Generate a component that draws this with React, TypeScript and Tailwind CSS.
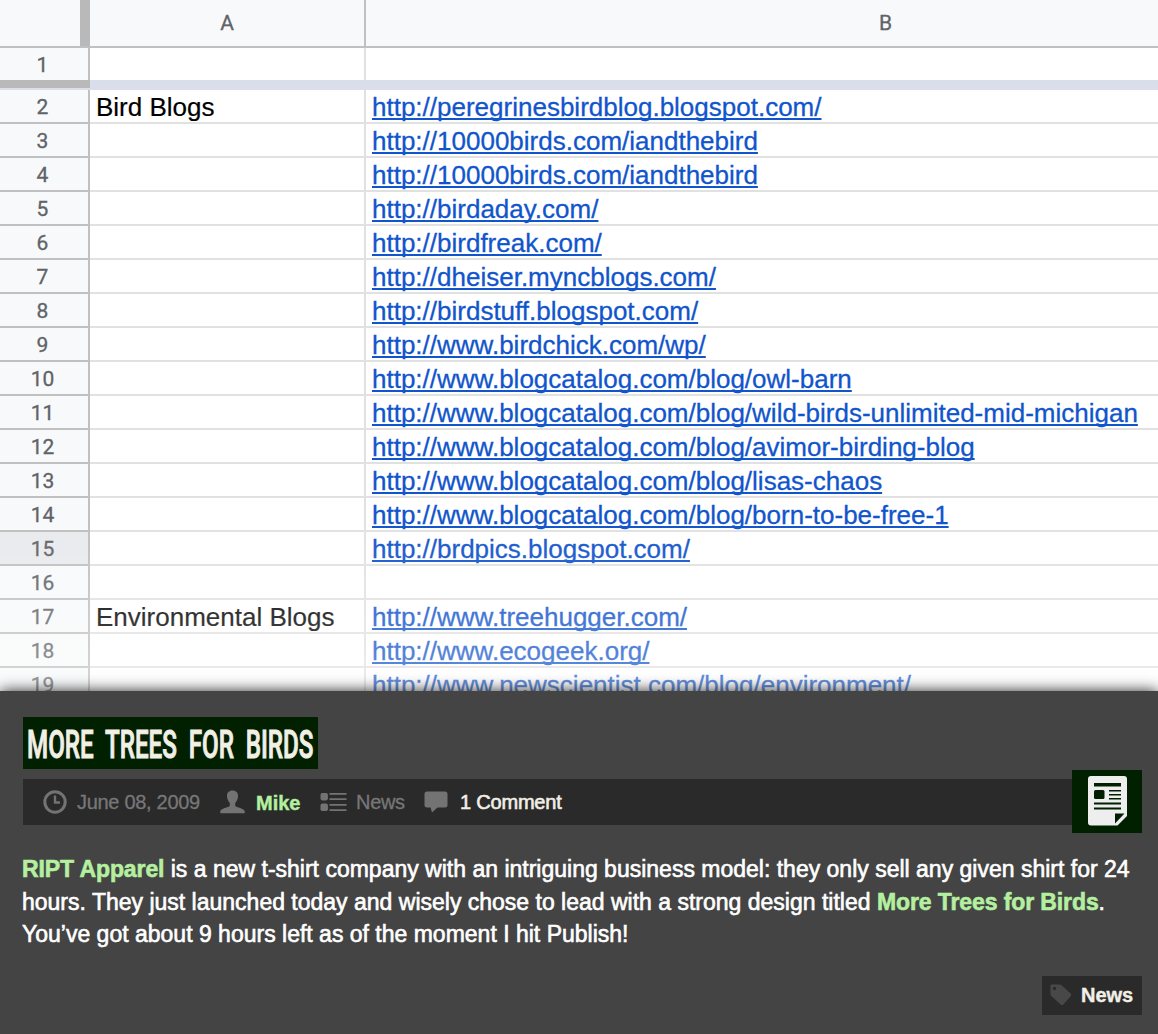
import React from 'react';

interface Row {
  num: number;
  label?: string;
  url?: string;
}

const rows: Row[] = [
  { num: 2, label: 'Bird Blogs', url: 'http://peregrinesbirdblog.blogspot.com/' },
  { num: 3, url: 'http://10000birds.com/iandthebird' },
  { num: 4, url: 'http://10000birds.com/iandthebird' },
  { num: 5, url: 'http://birdaday.com/' },
  { num: 6, url: 'http://birdfreak.com/' },
  { num: 7, url: 'http://dheiser.myncblogs.com/' },
  { num: 8, url: 'http://birdstuff.blogspot.com/' },
  { num: 9, url: 'http://www.birdchick.com/wp/' },
  { num: 10, url: 'http://www.blogcatalog.com/blog/owl-barn' },
  { num: 11, url: 'http://www.blogcatalog.com/blog/wild-birds-unlimited-mid-michigan' },
  { num: 12, url: 'http://www.blogcatalog.com/blog/avimor-birding-blog' },
  { num: 13, url: 'http://www.blogcatalog.com/blog/lisas-chaos' },
  { num: 14, url: 'http://www.blogcatalog.com/blog/born-to-be-free-1' },
  { num: 15, url: 'http://brdpics.blogspot.com/' },
  { num: 16 },
  { num: 17, label: 'Environmental Blogs', url: 'http://www.treehugger.com/' },
  { num: 18, url: 'http://www.ecogeek.org/' },
  { num: 19, url: 'http://www.newscientist.com/blog/environment/' },
];

const SheetRow: React.FC<{ row: Row }> = ({ row }) => (
  <div className="flex h-[34px] shrink-0">
    <div
      className={`w-[90px] border-r-2 border-b-2 border-[#c0c0c0] pr-[3px] text-center font-[Roboto,sans-serif] text-[21px] leading-[35px] text-[#5f6368] [-webkit-text-stroke:0.3px] ${
        row.num === 15 ? 'bg-[#e8eaed]' : 'bg-[#f8f9fa]'
      }`}
    >
      {row.num}
    </div>
    <div className="w-[276px] border-r-2 border-b-2 border-[#e1e1e1] pl-[6px] text-[26px] leading-[35px] whitespace-nowrap [-webkit-text-stroke:0.2px]">
      {row.label}
    </div>
    <div className="flex-1 border-b-2 border-[#e1e1e1] pl-[6px] text-[26px] leading-[35px] whitespace-nowrap [-webkit-text-stroke:0.3px]">
      {row.url && (
        <a className="text-[#1155cc] underline decoration-2 underline-offset-2 [text-decoration-skip-ink:none]">{row.url}</a>
      )}
    </div>
  </div>
);

const Spreadsheet: React.FC = () => (
  <div className="relative flex h-[691px] flex-col overflow-hidden bg-white font-['Liberation_Sans',Arial,sans-serif] text-black">
    {/* Column headers */}
    <div className="flex h-[48px] shrink-0 border-b-2 border-[#c0c0c0] bg-[#f8f9fa] text-center font-[Roboto,sans-serif] text-[21px] leading-[46px] text-[#5f6368] [-webkit-text-stroke:0.3px]">
      <div className="w-[90px] shrink-0 border-r-[10px] border-[#b9b9b9]" />
      <div className="w-[276px] shrink-0 border-r-2 border-[#c0c0c0]">A</div>
      <div className="w-[1039px] shrink-0">B</div>
    </div>
    {/* Frozen row and its drag handle */}
    <div className="flex h-[32px] shrink-0">
      <div className="w-[90px] border-r-2 border-[#c0c0c0] bg-[#f8f9fa] pr-[3px] text-center font-[Roboto,sans-serif] text-[21px] leading-[35px] text-[#5f6368] [-webkit-text-stroke:0.3px]">
        1
      </div>
      <div className="w-[276px] border-r-2 border-[#e1e1e1]" />
    </div>
    <div className="flex h-[10px] shrink-0 bg-[#d9deea]">
      <div className="h-[8px] w-[90px] bg-[#b9b9b9]" />
    </div>
    {rows.map((row) => (
      <SheetRow key={row.num} row={row} />
    ))}
    {/* Fade into the post below */}
    <div className="absolute inset-x-0 bottom-0 h-[171px] bg-gradient-to-b from-white/0 to-white/35" />
  </div>
);

const ClockIcon = () => (
  <svg className="h-[24px] w-[24px] shrink-0" viewBox="0 0 24 24" fill="none" stroke="#737373" strokeWidth="3">
    <circle cx="12" cy="12" r="10.2" />
    <path d="M12 5.5V12.5H17" strokeWidth="2.4" />
  </svg>
);

const UserIcon = () => (
  <svg className="h-[24px] w-[25px] shrink-0" viewBox="0 0 25 24" fill="#737373">
    <path d="M12.5.5c3.600 0 5.800 2.300 5.500 5.700-.2 3.300-1.500 5.400-2.800 6.800v3c1.200 1.400 9.300 2.200 9.500 5.400v1.800H.3v-1.800c.2-3.200 8.300-4 9.500-5.400v-3C8.500 11.600 7.200 9.500 7 6.200 6.700 2.800 8.900.5 12.500.5z" />
  </svg>
);

const ListIcon = () => (
  <svg className="h-[20px] w-[28px] shrink-0" viewBox="0 0 28 20" fill="#737373">
    <rect x="0.5" y="1" width="7.4" height="7.4" rx="1.8" />
    <rect x="0.5" y="11.600" width="7.4" height="7.4" rx="1.8" />
    <path d="M9.500 1h17v1.800h-17zM9.500 6.300h17v1.800h-17zM9.500 12h17v1.800h-17zM9.500 17.200h17V19h-17z" />
  </svg>
);

const CommentIcon = () => (
  <svg className="h-[22px] w-[24px] shrink-0" viewBox="0 0 24 22" fill="#737373">
    <path d="M3 .5h18A2.500 2.500 0 0 1 23.500 3v11a2.500 2.500 0 0 1-2.500 2.500h-7.500L8 21.500l-1.500-5H3A2.500 2.500 0 0 1 .5 14V3A2.500 2.500 0 0 1 3 .5z" />
  </svg>
);

const PostIcon = () => (
  <svg className="h-[50px] w-[39px] shrink-0" viewBox="0 0 39 50">
    <path d="M3 0h33a3 3 0 0 1 3 3v37l-9.500 9.500H3a3 3 0 0 1-3-3V3a3 3 0 0 1 3-3z" fill="#eee" />
    <path d="M6 7h27v3.500H6zM6 26.500h27v2H6zM6 31.500h27v2H6zM21 14h12v1.600H21zM21 18h12v1.600H21zM21 22h12v1.600H21z" fill="#002000" />
    <rect x="6" y="14" width="10.5" height="9" rx="1.5" fill="#002000" />
    <path d="M27 37.500h9.500L27 47.500z" fill="#002000" />
  </svg>
);

const TagIcon = () => (
  <svg className="h-[22px] w-[22px] shrink-0" viewBox="0 0 22 22" fill="#484848">
    <path
      fillRule="evenodd"
      d="M1.500.5h8.200c.8 0 1.300.2 1.900.7l9 8.300c.9.900.9 1.900.1 2.800l-7.300 8.200c-.8.900-1.900.9-2.800.1L1.300 12C.7 11.500.5 10.900.5 10.200V1.500c0-.6.400-1 1-1zM4.500 2.800a1.700 1.700 0 1 0 0 3.400 1.700 1.700 0 0 0 0-3.400z"
    />
  </svg>
);

const Post: React.FC = () => (
  <article className="relative h-[343px] bg-[#444] px-[22px] pt-[26px] font-['Liberation_Sans',Helvetica,sans-serif] shadow-[0_0_14px_rgba(0,0,0,0.85)]">
    <h2 className="ml-px h-[52px] w-[295px] bg-[#002000] pl-[4px] text-[#f2efe6]">
      <span className="inline-block origin-left scale-x-[0.637] font-[Roboto,sans-serif] text-[38px] leading-[56px] font-medium whitespace-nowrap [word-spacing:9px] [-webkit-text-stroke:1px]">
        MORE TREES FOR BIRDS
      </span>
    </h2>

    <div className="mt-[10px] ml-px flex h-[46px] w-[1119px] items-center bg-[#2a2a2a] text-[20px] whitespace-nowrap text-[#777]">
      <div className="flex w-[177px] items-center gap-[10px] pl-[20px]">
        <ClockIcon />
        <span className="tracking-[-0.3px] [-webkit-text-stroke:0.3px]">June 08, 2009</span>
      </div>
      <div className="flex w-[97px] items-center gap-[11px] pl-[20px]">
        <UserIcon />
        <a className="mt-[2px] font-bold text-[#b4f0a0] [-webkit-text-stroke:0.4px]">Mike</a>
      </div>
      <div className="flex w-[108px] items-center gap-[8px] pl-[23px]">
        <ListIcon />
        <span className="tracking-[-0.3px] [-webkit-text-stroke:0.3px]">News</span>
      </div>
      <div className="flex items-center gap-[12px] pl-[19px]">
        <CommentIcon />
        <a className="tracking-[-0.2px] text-[#f2efe6] [-webkit-text-stroke:0.6px]">1 Comment</a>
      </div>
      <div className="-mt-[2px] ml-auto flex h-[63px] w-[70px] items-center justify-center bg-[#002000]">
        <PostIcon />
      </div>
    </div>

    <p className="mt-[28px] text-[23px] leading-[32.5px] whitespace-nowrap text-white [-webkit-text-stroke:0.6px]">
      <span className="block w-max">
        <a className="font-bold tracking-[-0.1px] text-[#b4f0a0]">RIPT Apparel</a> is a new t-shirt company with an intriguing business model: they only sell any given shirt for 24
      </span>
      <span className="block w-max">
        hours. They just launched today and wisely chose to lead with a strong design titled{' '}
        <a className="font-bold tracking-[-0.1px] text-[#b4f0a0]">More Trees for Birds</a>.
      </span>
      <span className="block w-max">You’ve got about 9 hours left as of the moment I hit Publish!</span>
    </p>

    <div className="mt-[25px] ml-auto mr-[-6px] flex h-[39px] w-[100px] items-center gap-[9px] bg-[#2a2a2a] pl-[8px]">
      <TagIcon />
      <a className="text-[20px] font-bold text-[#f2efe6] [-webkit-text-stroke:0.4px]">News</a>
    </div>
  </article>
);

const App: React.FC = () => {
  return (
    <main className="h-[1034px] w-[1158px] overflow-hidden bg-white">
      <Spreadsheet />
      <Post />
    </main>
  );
};

export default App;
